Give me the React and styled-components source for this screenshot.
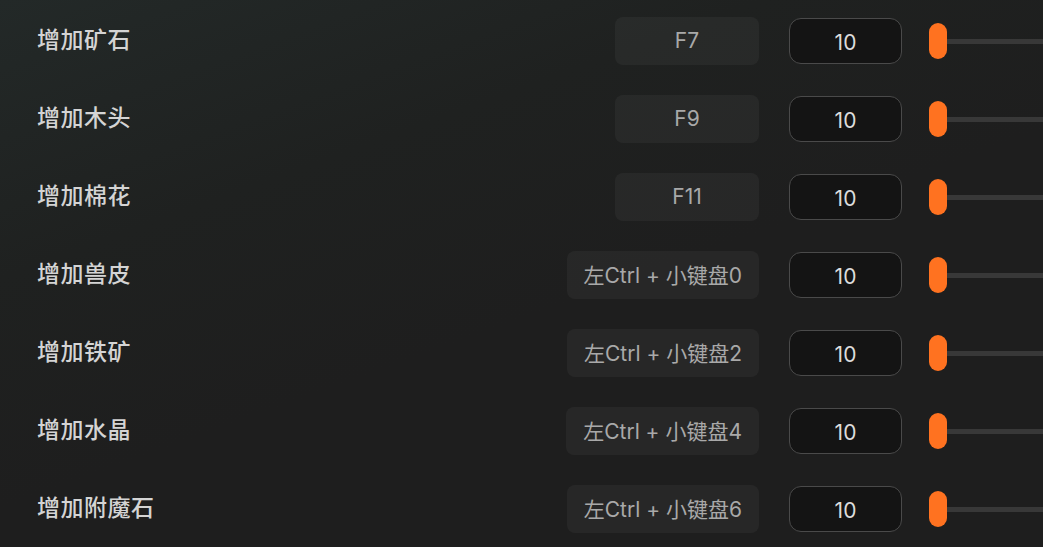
import React from 'react';
import styled, { createGlobalStyle } from 'styled-components';

const rows = [
  { name: '增加矿石', key: 'F7', value: 10 },
  { name: '增加木头', key: 'F9', value: 10 },
  { name: '增加棉花', key: 'F11', value: 10 },
  { name: '增加兽皮', key: '左Ctrl + 小键盘0', value: 10 },
  { name: '增加铁矿', key: '左Ctrl + 小键盘2', value: 10 },
  { name: '增加水晶', key: '左Ctrl + 小键盘4', value: 10 },
  { name: '增加附魔石', key: '左Ctrl + 小键盘6', value: 10 },
];

const GlobalStyle = createGlobalStyle`
  html, body {
    margin: 0;
    padding: 0;
    overflow: hidden;
    background: #1e1e1e;
  }
  body {
    font-family: Inter, "Noto Sans", "Noto Sans CJK SC", sans-serif;
  }
`;

export default function App() {
  return (
    <>
      <GlobalStyle />
      <Page>
        <List>
          {rows.map((r) => (
            <Row key={r.name}>
              <Label>{r.name}</Label>
              <KeyBadge>{r.key}</KeyBadge>
              <NumberBox>{r.value}</NumberBox>
              <Slider>
                <Thumb />
              </Slider>
            </Row>
          ))}
        </List>
      </Page>
    </>
  );
}

const Page = styled.div`
  width: 1043px;
  height: 547px;
  overflow: hidden;
  background: linear-gradient(160deg, #232928 0%, #1f2120 30%, #1e1e1e 55%, #1e1e1e 100%);
`;

const List = styled.div`
  width: 1063px;
  padding-top: 2px;
  display: flex;
  flex-direction: column;
`;

const Row = styled.div`
  height: 78px;
  display: grid;
  grid-template-columns: 1fr auto 113px 161px;
  align-items: center;
  padding-left: 37px;
`;

const Label = styled.div`
  font-family: "Noto Sans CJK SC", sans-serif;
  font-size: 23px;
  font-weight: 500;
  color: #d4d4d4;
  letter-spacing: 0.5px;
  margin-top: -6px;
`;

const KeyBadge = styled.div`
  min-width: 144px;
  box-sizing: border-box;
  height: 48px;
  padding: 0 17px 2px;
  margin-right: 30px;
  border-radius: 8px;
  background: rgba(255, 255, 255, 0.045);
  display: flex;
  align-items: center;
  justify-content: center;
  font-family: Inter, "Noto Sans CJK SC", sans-serif;
  font-size: 21px;
  color: #a9a9a9;
  white-space: nowrap;
`;

const NumberBox = styled.div`
  height: 46px;
  box-sizing: border-box;
  border: 1.5px solid #4a4a4a;
  border-radius: 12px;
  background: #141414;
  display: flex;
  align-items: center;
  justify-content: center;
  padding-top: 3px;
  font-family: Inter, "Noto Sans", sans-serif;
  font-size: 21px;
  color: #dcdcdc;
`;

const Slider = styled.div`
  position: relative;
  height: 36px;
  padding-left: 27px;
  display: flex;
  align-items: center;

  &::before {
    content: '';
    position: absolute;
    left: 27px;
    right: 0;
    top: 16px;
    height: 5px;
    background: #383838;
  }
`;

const Thumb = styled.div`
  position: relative;
  width: 18px;
  height: 36px;
  border-radius: 9px;
  background: #ff7220;
`;
